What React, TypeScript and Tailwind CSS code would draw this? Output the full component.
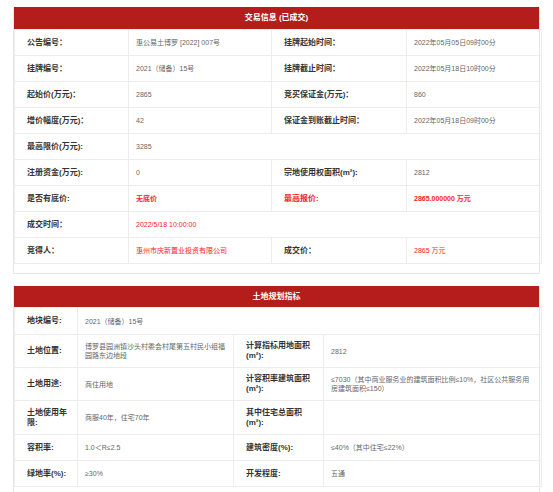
import React from "react";

type Cell = { text?: React.ReactNode; span?: number; kind: "label" | "value"; red?: boolean; bold?: boolean };

const font = { fontFamily: '"Liberation Sans", "Noto Sans CJK SC", sans-serif' };

function Td({ c }: { c: Cell }) {
  const base =
    c.kind === "label"
      ? "font-bold text-[8px] leading-[10px] " + (c.red ? "text-[#ff1a1a]" : "text-[#333]")
      : "text-[7px] leading-[9px] " + (c.red ? "text-[#ff1a1a]" : "text-[#666]") + (c.bold ? " font-bold" : "");
  return (
    <td colSpan={c.span} className={"border border-[#ededed] align-middle " + base + " " + (c.kind === "label" ? "pl-3 pr-[10px]" : "pl-[7px] pr-2")}>
      {c.text}
    </td>
  );
}

const L = (t: React.ReactNode, red = false): Cell => ({ text: t, kind: "label", red });
const V = (t: React.ReactNode, opts: Partial<Cell> = {}): Cell => ({ text: t, kind: "value", ...opts });

const trade: Cell[][] = [
  [L("公告编号："), V("惠公易土博罗 [2022] 007号"), L("挂牌起始时间："), V("2022年05月05日09时00分")],
  [L("挂牌编号："), V("2021（储备）15号"), L("挂牌截止时间："), V("2022年05月18日10时00分")],
  [L("起始价(万元)："), V("2865"), L("竞买保证金(万元)："), V("860")],
  [L("增价幅度(万元)："), V("42"), L("保证金到账截止时间："), V("2022年05月18日09时00分")],
  [L("最高限价(万元):"), V("3285", { span: 3 })],
  [L("注册资金(万元):"), V("0"), L("宗地使用权面积(m²):"), V("2812")],
  [L("是否有底价:"), V("无底价", { red: true, bold: true }), L("最高报价:", true), V("2865.000000 万元", { red: true, bold: true })],
  [L("成交时间："), V("2022/5/18 10:00:00", { red: true, span: 3 })],
  [L("竞得人："), V("惠州市庆新置业投资有限公司", { red: true }), L("成交价："), V("2865 万元", { red: true })],
];

const land: { h: string; cells: Cell[] }[] = [
  { h: "h-[27px]", cells: [L("地块编号:"), V("2021（储备）15号", { span: 3 })] },
  {
    h: "h-[33px]",
    cells: [L("土地位置:"), V("博罗县园洲镇沙头村委会村尾第五村民小组福园路东边地段"), L("计算指标用地面积(m²):"), V("2812")],
  },
  {
    h: "h-[33px]",
    cells: [L("土地用途:"), V("商住用地"), L("计容积率建筑面积(m²):"), V("≤7030（其中商业服务业的建筑面积比例≤10%，社区公共服务用房建筑面积≤150）")],
  },
  { h: "h-[34px]", cells: [L("土地使用年限:"), V("商服40年，住宅70年"), L("其中住宅总面积(m²):"), V("")] },
  { h: "h-[26px]", cells: [L("容积率:"), V("1.0＜R≤2.5"), L("建筑密度(%):"), V("≤40%（其中住宅≤22%）")] },
  { h: "h-[26px]", cells: [L("绿地率(%):"), V("≥30%"), L("开发程度:"), V("五通")] },
];

function Header({ title }: { title: string }) {
  return (
    <div className="h-[22px] bg-[#b51d1d] text-white font-bold text-[8px] flex items-center justify-center">{title}</div>
  );
}

export default function App() {
  return (
    <div className="bg-white w-[553px] h-[492px] overflow-hidden pt-[7px] pl-[13px]" style={font}>
      <div className="w-[527px] border-x border-b border-[#e6e6e6] pb-[9px]">
        <Header title="交易信息 (已成交)" />
        <table className="w-full table-fixed border-collapse">
          <colgroup>
            <col className="w-[114px]" />
            <col className="w-[143px]" />
            <col className="w-[135px]" />
            <col className="w-[135px]" />
          </colgroup>
          <tbody>
            {trade.map((row, i) => (
              <tr key={i} className="h-[26px]">
                {row.map((c, j) => (
                  <Td key={j} c={c} />
                ))}
              </tr>
            ))}
          </tbody>
        </table>
      </div>

      <div className="w-[527px] mt-[12px] border-x border-b border-[#e6e6e6] pb-[9px]">
        <div className="h-[21px] bg-[#b51d1d] text-white font-bold text-[8px] flex items-center justify-center">土地规划指标</div>
        <table className="w-full table-fixed border-collapse">
          <colgroup>
            <col className="w-[63px]" />
            <col className="w-[156px]" />
            <col className="w-[90px]" />
            <col className="w-[218px]" />
          </colgroup>
          <tbody>
            {land.map((row, i) => (
              <tr key={i} className={row.h}>
                {row.cells.map((c, j) => (
                  <Td key={j} c={c} />
                ))}
              </tr>
            ))}
          </tbody>
        </table>
      </div>
    </div>
  );
}
